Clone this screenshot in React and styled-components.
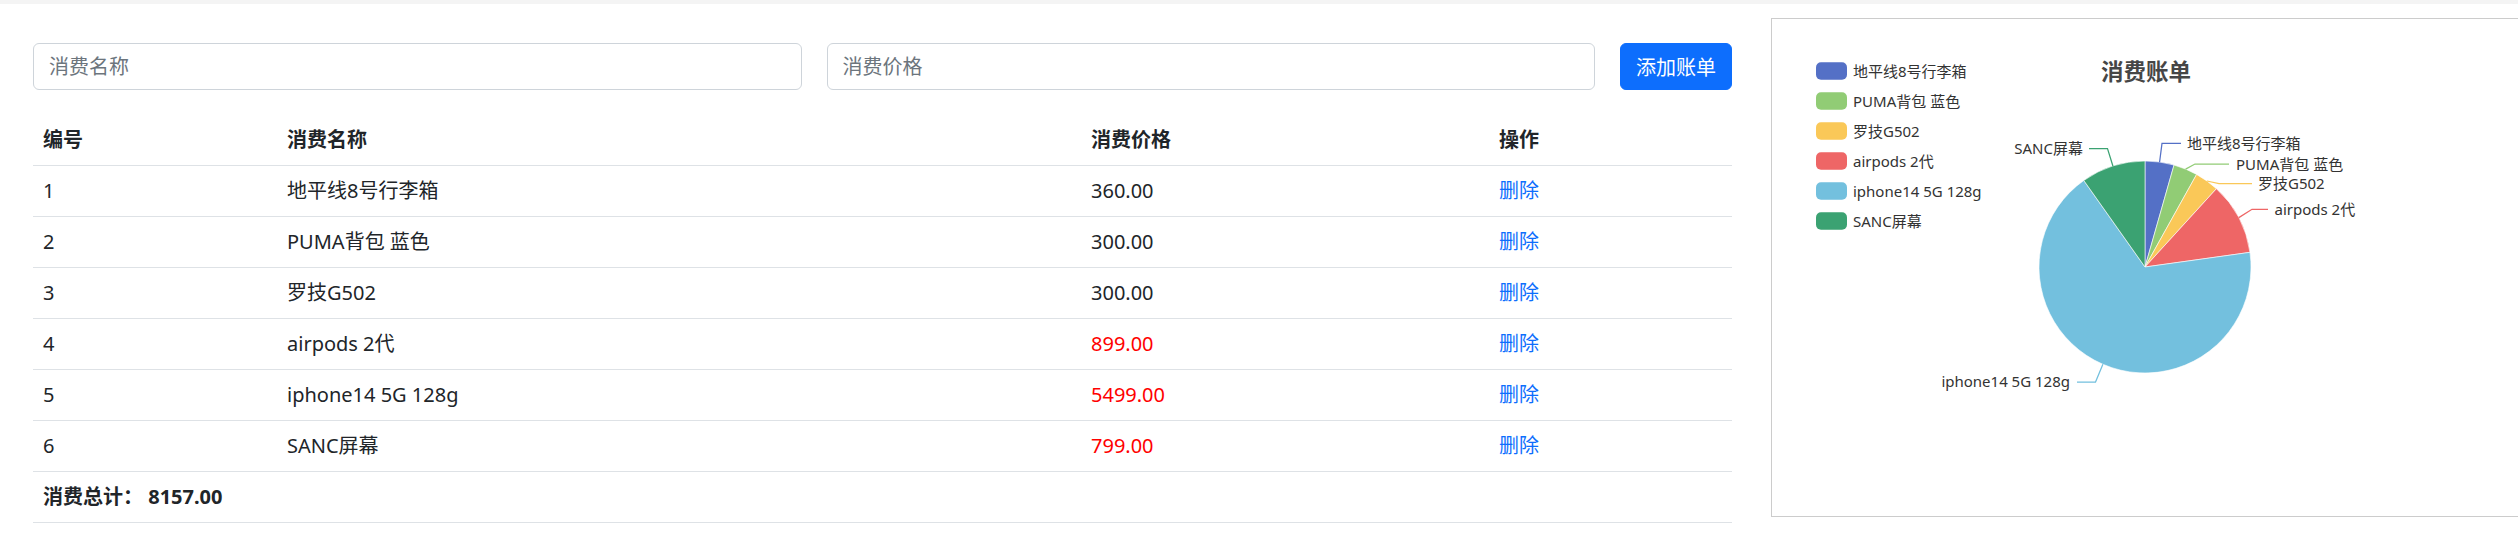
import React from 'react';
import styled, { createGlobalStyle } from 'styled-components';

const GlobalStyle = createGlobalStyle`
  html, body { margin: 0; padding: 0; background: #fff; }
  body {
    font-family: "Noto Sans", "Noto Sans CJK SC", sans-serif;
    color: #212529;
    overflow: hidden;
  }
  * { box-sizing: border-box; }
`;

const TopStrip = styled.div`
  height: 4px;
  background: #f4f4f4;
`;

const Page = styled.div`
  display: flex;
  align-items: flex-start;
  gap: 39px;
  padding-left: 33px;
  width: 100%;
  overflow: hidden;
`;

const LeftCol = styled.div`
  flex: 0 0 1699px;
  margin-top: 39px;
`;

const Form = styled.div`
  display: flex;
  gap: 25px;
  margin-bottom: 25px;
`;

const Input = styled.input`
  flex: 1 1 0;
  min-width: 0;
  height: 47px;
  padding: 0 15px;
  font-family: inherit;
  font-size: 20px;
  color: #212529;
  border: 1px solid #ced4da;
  border-radius: 6px;
  outline: none;
  &::placeholder { color: #6c757d; }
`;

const Button = styled.button`
  flex: none;
  height: 47px;
  padding: 0 15px;
  font-family: inherit;
  font-size: 20px;
  color: #fff;
  background: #0d6efd;
  border: 1px solid #0d6efd;
  border-radius: 6px;
  cursor: pointer;
`;

const Table = styled.table`
  width: 100%;
  border-collapse: collapse;
  font-size: 20px;
`;

const Th = styled.th`
  width: ${p => p.$w}px;
  text-align: left;
  font-weight: 700;
  padding: 10px;
  line-height: 30px;
  border-bottom: 1px solid #dee2e6;
`;

const Td = styled.td`
  padding: 10px;
  line-height: 30px;
  border-bottom: 1px solid #dee2e6;
  color: ${p => p.$color || '#212529'};
  font-weight: ${p => (p.$bold ? 700 : 400)};
`;

const DeleteLink = styled.a`
  color: #0d6efd;
  text-decoration: none;
  cursor: pointer;
`;

const Panel = styled.div`
  flex: 0 0 800px;
  margin-top: 14px;
  height: 499px;
  border: 1px solid #ccc;
  background: #fff;
`;

const ChartSvg = styled.svg`
  display: block;
  font-family: "Noto Sans", "Noto Sans CJK SC", sans-serif;
`;

const items = [
  { name: '地平线8号行李箱', price: 360, color: '#5470c6' },
  { name: 'PUMA背包 蓝色', price: 300, color: '#91cc75' },
  { name: '罗技G502', price: 300, color: '#fac858' },
  { name: 'airpods 2代', price: 899, color: '#ee6666' },
  { name: 'iphone14 5G 128g', price: 5499, color: '#73c0de' },
  { name: 'SANC屏幕', price: 799, color: '#3ba272' },
];

const labels = [
  { pts: '387.6,143 390,124.4 409,124.4', x: 415, y: 124.4, anchor: 'start' },
  { pts: '413.6,150.1 423,145 457,145', x: 464, y: 144.5, anchor: 'start' },
  { pts: '434.9,162 447,164.5 480,164.5', x: 486, y: 164, anchor: 'start' },
  { pts: '466.8,198.6 480,190.3 496,190.3', x: 502.5, y: 189.5, anchor: 'start' },
  { pts: '330.9,345.3 323.5,363 305,363', x: 298, y: 362, anchor: 'end' },
  { pts: '340.9,147 335.5,129.6 317,129.6', x: 311, y: 129.2, anchor: 'end' },
];

const CX = 373;
const CY = 248;
const R = 106;

function pt(deg, r) {
  const a = (deg * Math.PI) / 180;
  return [CX + r * Math.sin(a), CY - r * Math.cos(a)];
}

function slicePath(a0, a1) {
  const [x0, y0] = pt(a0, R);
  const [x1, y1] = pt(a1, R);
  const large = a1 - a0 > 180 ? 1 : 0;
  return `M${CX},${CY} L${x0},${y0} A${R},${R} 0 ${large} 1 ${x1},${y1} Z`;
}

function PieChart() {
  const total = items.reduce((s, i) => s + i.price, 0);
  let acc = 0;
  const slices = items.map(it => {
    const a0 = acc;
    acc += (it.price / total) * 360;
    return { ...it, d: slicePath(a0, acc) };
  });
  return (
    <ChartSvg width="798" height="497" viewBox="0 0 798 497">
      <text x="374" y="52" textAnchor="middle" dominantBaseline="central"
        fontSize="22.5" fontWeight="700" fill="#464646">消费账单</text>
      {items.map((it, i) => (
        <g key={it.name}>
          <rect x="44" y={43.3 + i * 30} width="31" height="17.5" rx="5" fill={it.color} />
          <text x="81" y={52 + i * 30} dominantBaseline="central" fontSize="15" fill="#333">
            {it.name}
          </text>
        </g>
      ))}
      {slices.map(s => (
        <path key={s.name} d={s.d} fill={s.color} stroke="#fff" strokeWidth="0.6" strokeLinejoin="round" />
      ))}
      {labels.map((l, i) => (
        <g key={i}>
          <polyline points={l.pts} fill="none" stroke={items[i].color} strokeWidth="1.25" />
          <text x={l.x} y={l.y} textAnchor={l.anchor} dominantBaseline="central" fontSize="15" fill="#333">
            {items[i].name}
          </text>
        </g>
      ))}
    </ChartSvg>
  );
}

export default function App() {
  const total = items.reduce((s, i) => s + i.price, 0);
  return (
    <>
      <GlobalStyle />
      <TopStrip />
      <Page>
        <LeftCol>
          <Form>
            <Input placeholder="消费名称" />
            <Input placeholder="消费价格" />
            <Button>添加账单</Button>
          </Form>
          <Table>
            <thead>
              <tr>
                <Th $w={244}>编号</Th>
                <Th $w={804}>消费名称</Th>
                <Th $w={408}>消费价格</Th>
                <Th $w={243}>操作</Th>
              </tr>
            </thead>
            <tbody>
              {items.map((it, i) => (
                <tr key={it.name}>
                  <Td>{i + 1}</Td>
                  <Td>{it.name}</Td>
                  <Td $color={it.price > 500 ? '#ff0000' : undefined}>{it.price.toFixed(2)}</Td>
                  <Td><DeleteLink>删除</DeleteLink></Td>
                </tr>
              ))}
              <tr>
                <Td $bold colSpan={4}>消费总计： {total.toFixed(2)}</Td>
              </tr>
            </tbody>
          </Table>
        </LeftCol>
        <Panel>
          <PieChart />
        </Panel>
      </Page>
    </>
  );
}
